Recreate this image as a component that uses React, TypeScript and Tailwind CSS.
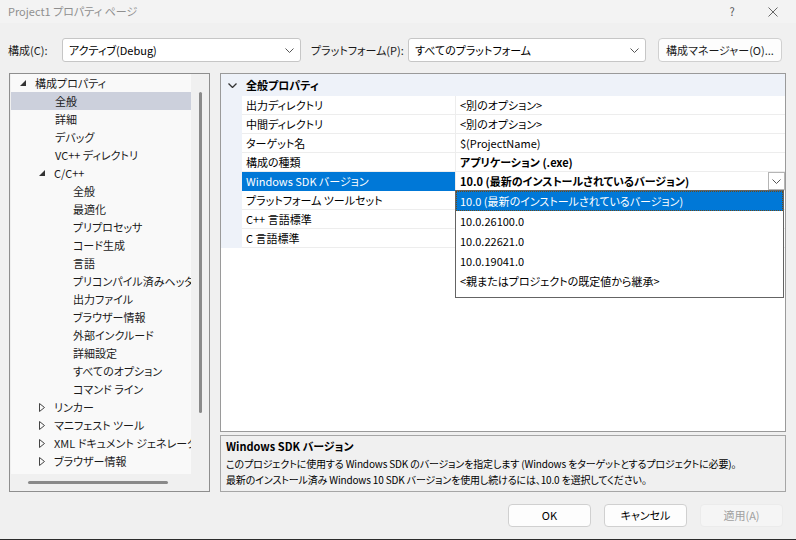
import React from "react"

type TreeItem = { label: string; pad: string; icon?: "open" | "closed" }

const tree: TreeItem[] = [
  { label: "構成プロパティ", pad: "pl-[9px]", icon: "open" },
  { label: "全般", pad: "pl-[44px]" },
  { label: "詳細", pad: "pl-[44px]" },
  { label: "デバッグ", pad: "pl-[44px]" },
  { label: "VC++ ディレクトリ", pad: "pl-[44px]" },
  { label: "C/C++", pad: "pl-[28px]", icon: "open" },
  { label: "全般", pad: "pl-[62px]" },
  { label: "最適化", pad: "pl-[62px]" },
  { label: "プリプロセッサ", pad: "pl-[62px]" },
  { label: "コード生成", pad: "pl-[62px]" },
  { label: "言語", pad: "pl-[62px]" },
  { label: "プリコンパイル済みヘッダー", pad: "pl-[62px]" },
  { label: "出力ファイル", pad: "pl-[62px]" },
  { label: "ブラウザー情報", pad: "pl-[62px]" },
  { label: "外部インクルード", pad: "pl-[62px]" },
  { label: "詳細設定", pad: "pl-[62px]" },
  { label: "すべてのオプション", pad: "pl-[62px]" },
  { label: "コマンド ライン", pad: "pl-[62px]" },
  { label: "リンカー", pad: "pl-[28px]", icon: "closed" },
  { label: "マニフェスト ツール", pad: "pl-[28px]", icon: "closed" },
  { label: "XML ドキュメント ジェネレーター", pad: "pl-[28px]", icon: "closed" },
  { label: "ブラウザー情報", pad: "pl-[28px]", icon: "closed" },
  { label: "ビルド イベント", pad: "pl-[28px]", icon: "closed" },
]

const props: { name: string; value: string; bold?: boolean; selected?: boolean }[] = [
  { name: "出力ディレクトリ", value: "<別のオプション>" },
  { name: "中間ディレクトリ", value: "<別のオプション>" },
  { name: "ターゲット名", value: "$(ProjectName)" },
  { name: "構成の種類", value: "アプリケーション (.exe)", bold: true },
  { name: "Windows SDK バージョン", value: "10.0 (最新のインストールされているバージョン)", bold: true, selected: true },
  { name: "プラットフォーム ツールセット", value: "" },
  { name: "C++ 言語標準", value: "" },
  { name: "C 言語標準", value: "" },
]

const options = [
  "10.0 (最新のインストールされているバージョン)",
  "10.0.26100.0",
  "10.0.22621.0",
  "10.0.19041.0",
  "<親またはプロジェクトの既定値から継承>",
]

function Chevron({ className = "" }: { className?: string }) {
  return (
    <svg width="9" height="5" viewBox="0 0 9 5" className={className}>
      <polyline points="0.5,0.5 4.5,4.5 8.5,0.5" fill="none" stroke="#555" strokeWidth="1" />
    </svg>
  )
}

function TreeArrow({ icon }: { icon?: "open" | "closed" }) {
  if (icon === "open")
    return (
      <svg width="6" height="6" viewBox="0 0 6 6">
        <polygon points="6,0 6,6 0,6" fill="#333" />
      </svg>
    )
  if (icon === "closed")
    return (
      <svg width="6" height="9" viewBox="0 0 6 9">
        <polygon points="0.5,0.5 5.5,4.5 0.5,8.5" fill="none" stroke="#444" strokeWidth="1" />
      </svg>
    )
  return null
}

function Combo({ value, width }: { value: string; width: string }) {
  return (
    <div className={`${width} h-[24px] shrink-0 bg-white border border-[#c6c6c6] rounded-[3px] flex items-center pl-[6px] pr-[6px]`}>
      <span className="flex-1 text-black">{value}</span>
      <Chevron />
    </div>
  )
}

export default function App() {
  return (
    <div className="w-[796px] h-[540px] bg-[#f0f0f0] flex flex-col overflow-hidden border-b border-[#2b2b2b] font-['Noto_Sans_CJK_JP',sans-serif] [font-feature-settings:'palt'] text-[11px] text-[#1a1a1a]">
      {/* Title bar */}
      <div className="h-[23px] flex items-center pl-[8px] bg-[#f3f3f3] text-[#8f8f8f]">
        <span className="flex-1">Project1 プロパティ ページ</span>
        <span className="w-[20px] text-center text-[#555] mr-[26px]">?</span>
        <svg width="10" height="10" viewBox="0 0 10 10" className="mr-[18px]">
          <path d="M0.5,0.5 L9.5,9.5 M9.5,0.5 L0.5,9.5" stroke="#666" strokeWidth="1" />
        </svg>
      </div>

      {/* Toolbar */}
      <div className="h-[24px] mt-[15px] flex items-center pl-[8px] whitespace-nowrap">
        <span className="w-[54px] shrink-0">構成(C):</span>
        <Combo value="アクティブ(Debug)" width="w-[239px]" />
        <span className="ml-[10px] w-[97px] shrink-0">プラットフォーム(P):</span>
        <Combo value="すべてのプラットフォーム" width="w-[238px]" />
        <button className="ml-[12px] w-[124px] h-[24px] shrink-0 bg-[#fdfdfd] border border-[#d0d0d0] rounded-[4px]">
          構成マネージャー(O)...
        </button>
      </div>

      {/* Main area */}
      <div className="mt-[11px] h-[419px] flex pl-[9px] gap-[10px]">
        {/* Tree */}
        <div className="w-[201px] h-full border border-[#8e8e8e] flex flex-col">
          <div className="flex-1 flex min-h-0">
            <div className="flex-1 ml-[1px] bg-[#f9f9f9] overflow-hidden">
              {tree.map((t, i) => (
                <div
                  key={i}
                  className={`h-[18px] flex items-center whitespace-nowrap ${t.pad} ${i === 1 ? "bg-[#ccd0dc]" : ""}`}
                >
                  {t.icon ? (
                    <span className="w-[15px] shrink-0 flex items-center">
                      <TreeArrow icon={t.icon} />
                    </span>
                  ) : null}
                  <span className="shrink-0">{t.label}</span>
                </div>
              ))}
            </div>
            <div className="w-[18px] shrink-0 flex justify-center pt-[18px]">
              <div className="w-[3px] h-[321px] bg-[#8a8a8a] rounded-full" />
            </div>
          </div>
          <div className="h-[17px] flex items-center pl-[18px]">
            <div className="w-[140px] h-[3px] bg-[#8a8a8a] rounded-full" />
          </div>
        </div>

        {/* Right column */}
        <div className="w-[566px] h-full flex flex-col">
          <div className="relative h-[359px] border border-[#9a9a9a] bg-white">
            <div className="h-[22px] flex items-center bg-[#eef2f9]">
              <span className="w-[21px] flex justify-center pl-[2px]">
                <svg width="9" height="5" viewBox="0 0 9 5">
                  <polyline points="0.5,0.5 4.5,4.5 8.5,0.5" fill="none" stroke="#333" strokeWidth="1.3" />
                </svg>
              </span>
              <span className="pl-[4px] font-bold text-black">全般プロパティ</span>
            </div>
            {props.map((p, i) => (
              <div key={i} className="h-[19px] flex">
                <div className="w-[21px] bg-[#eef2f9]" />
                <div
                  className={`w-[213px] flex items-center pl-[4px] border-b ${
                    p.selected ? "bg-[#0078d7] text-white border-[#0078d7]" : "border-[#ededed] text-black"
                  }`}
                >
                  {p.name}
                </div>
                <div
                  className={`flex-1 flex items-center pl-[4px] border-b border-l border-[#ededed] text-black ${
                    p.bold ? "font-bold" : ""
                  }`}
                >
                  <span className="flex-1">{p.value}</span>
                  {p.selected ? (
                    <span className="w-[17px] h-[18px] border border-[#b5b5b5] flex items-center justify-center bg-white">
                      <Chevron />
                    </span>
                  ) : null}
                </div>
              </div>
            ))}

            {/* Dropdown list */}
            <div className="absolute left-[234px] top-[116px] w-[329px] h-[108px] bg-white border border-[#646464] border-t-dotted">
              {options.map((o, i) => (
                <div
                  key={i}
                  className={`h-[20px] flex items-center pl-[3px] whitespace-nowrap ${
                    i === 0 ? "bg-[#0078d7] text-white border border-dotted border-[#6a4a1a]" : "text-black pl-[4px]"
                  }`}
                >
                  {o}
                </div>
              ))}
            </div>
          </div>

          <div className="mt-[3px] h-[57px] border border-[#a6a6a6] bg-[#f0f0f0] px-[5px] pt-[2px] text-black">
            <div className="h-[16px] leading-[16px] font-bold">Windows SDK バージョン</div>
            <div className="mt-[2px] h-[16px] leading-[16px] whitespace-nowrap text-[10px] tracking-[-0.15px]">
              このプロジェクトに使用する Windows SDK のバージョンを指定します (Windows をターゲットとするプロジェクトに必要)。
            </div>
            <div className="h-[16px] leading-[16px] whitespace-nowrap text-[10px] tracking-[-0.15px]">
              最新のインストール済み Windows 10 SDK バージョンを使用し続けるには、10.0 を選択してください。
            </div>
          </div>
        </div>
      </div>

      {/* Buttons */}
      <div className="mt-[12px] flex justify-end gap-[13px] pr-[13px]">
        <button className="w-[83px] h-[23px] bg-[#fdfdfd] border border-[#d0d0d0] rounded-[4px] text-black">OK</button>
        <button className="w-[83px] h-[23px] bg-[#fdfdfd] border border-[#d0d0d0] rounded-[4px] text-black">キャンセル</button>
        <button className="w-[83px] h-[23px] bg-[#f5f5f5] border border-[#ebebeb] rounded-[4px] text-[#a0a0a0]">適用(A)</button>
      </div>
    </div>
  )
}
